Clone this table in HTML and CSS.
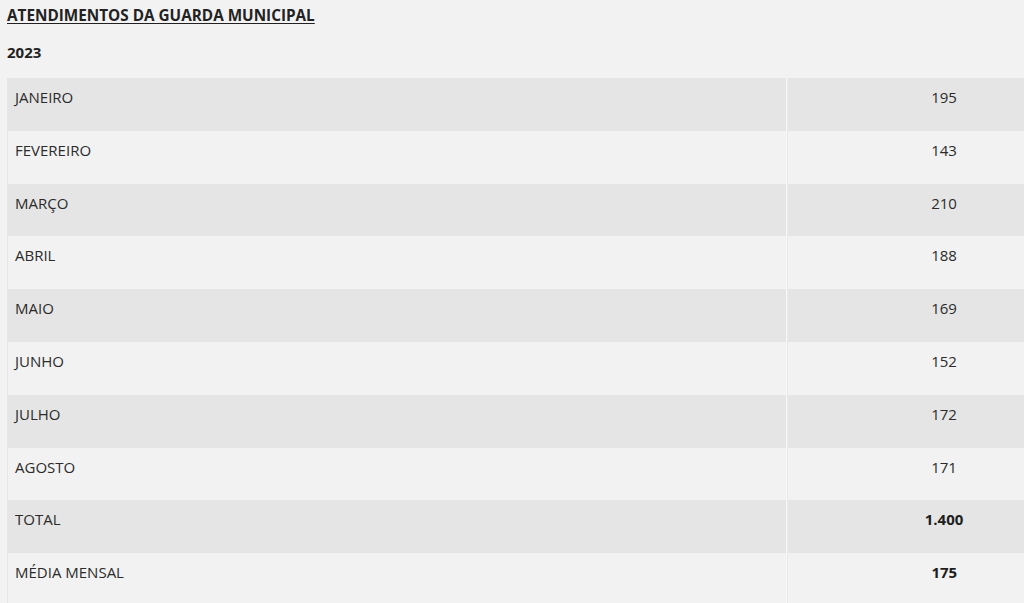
FILE: index.html
```html
<!DOCTYPE html>
<html lang="pt-BR">
<head>
<meta charset="utf-8">
<link rel="stylesheet" href="styles.css">
</head>
<body>
<div class="page">
  <h1 class="title">ATENDIMENTOS DA GUARDA MUNICIPAL</h1>
  <h2 class="year">2023</h2>
  <div class="table-wrap">
    <table class="data">
      <tbody>
        <tr class="odd"><td class="label">JANEIRO</td><td class="value">195</td></tr>
        <tr><td class="label">FEVEREIRO</td><td class="value">143</td></tr>
        <tr class="odd"><td class="label">MARÇO</td><td class="value">210</td></tr>
        <tr><td class="label">ABRIL</td><td class="value">188</td></tr>
        <tr class="odd"><td class="label">MAIO</td><td class="value">169</td></tr>
        <tr><td class="label">JUNHO</td><td class="value">152</td></tr>
        <tr class="odd"><td class="label">JULHO</td><td class="value">172</td></tr>
        <tr><td class="label">AGOSTO</td><td class="value">171</td></tr>
        <tr class="odd"><td class="label">TOTAL</td><td class="value strong">1.400</td></tr>
        <tr><td class="label">MÉDIA MENSAL</td><td class="value strong">175</td></tr>
      </tbody>
    </table>
  </div>
</div>
</body>
</html>
```

FILE: styles.css
```css
html, body {
  margin: 0;
  padding: 0;
  background: #f2f2f2;
  overflow: hidden;
}
body {
  font-family: "Open Sans", "Liberation Sans", sans-serif;
  color: #2b2b2b;
  font-size: 15px;
}
.page {
  padding: 4px 0 0 7px;
}
.title {
  margin: 0;
  font-size: 15.3px;
  font-weight: 700;
  line-height: 22px;
  color: #222;
  text-decoration: underline;
  text-underline-offset: 2px;
}
.year {
  margin: 15px 0 0;
  font-size: 15px;
  font-weight: 700;
  line-height: 22px;
  color: #222;
}
.table-wrap {
  margin-top: 15px;
  overflow: hidden;
}
.data {
  width: 1094px;
  border-collapse: collapse;
  border-left: 1px solid #e6e6e6;
}
.data td {
  padding: 8px 7px 0;
  height: 44.8px;
  vertical-align: top;
  line-height: 22px;
  box-sizing: content-box;
}
.data tr {
  background: #f2f2f2;
}
.data tr.odd {
  background: #e5e5e5;
}
.label {
  width: 765px;
  border-right: 1px solid #e9e9e9;
  box-shadow: inset -1px 0 0 #f7f7f7;
}
.value {
  text-align: center;
}
.strong {
  font-weight: 700;
  color: #1e1e1e;
}
```
